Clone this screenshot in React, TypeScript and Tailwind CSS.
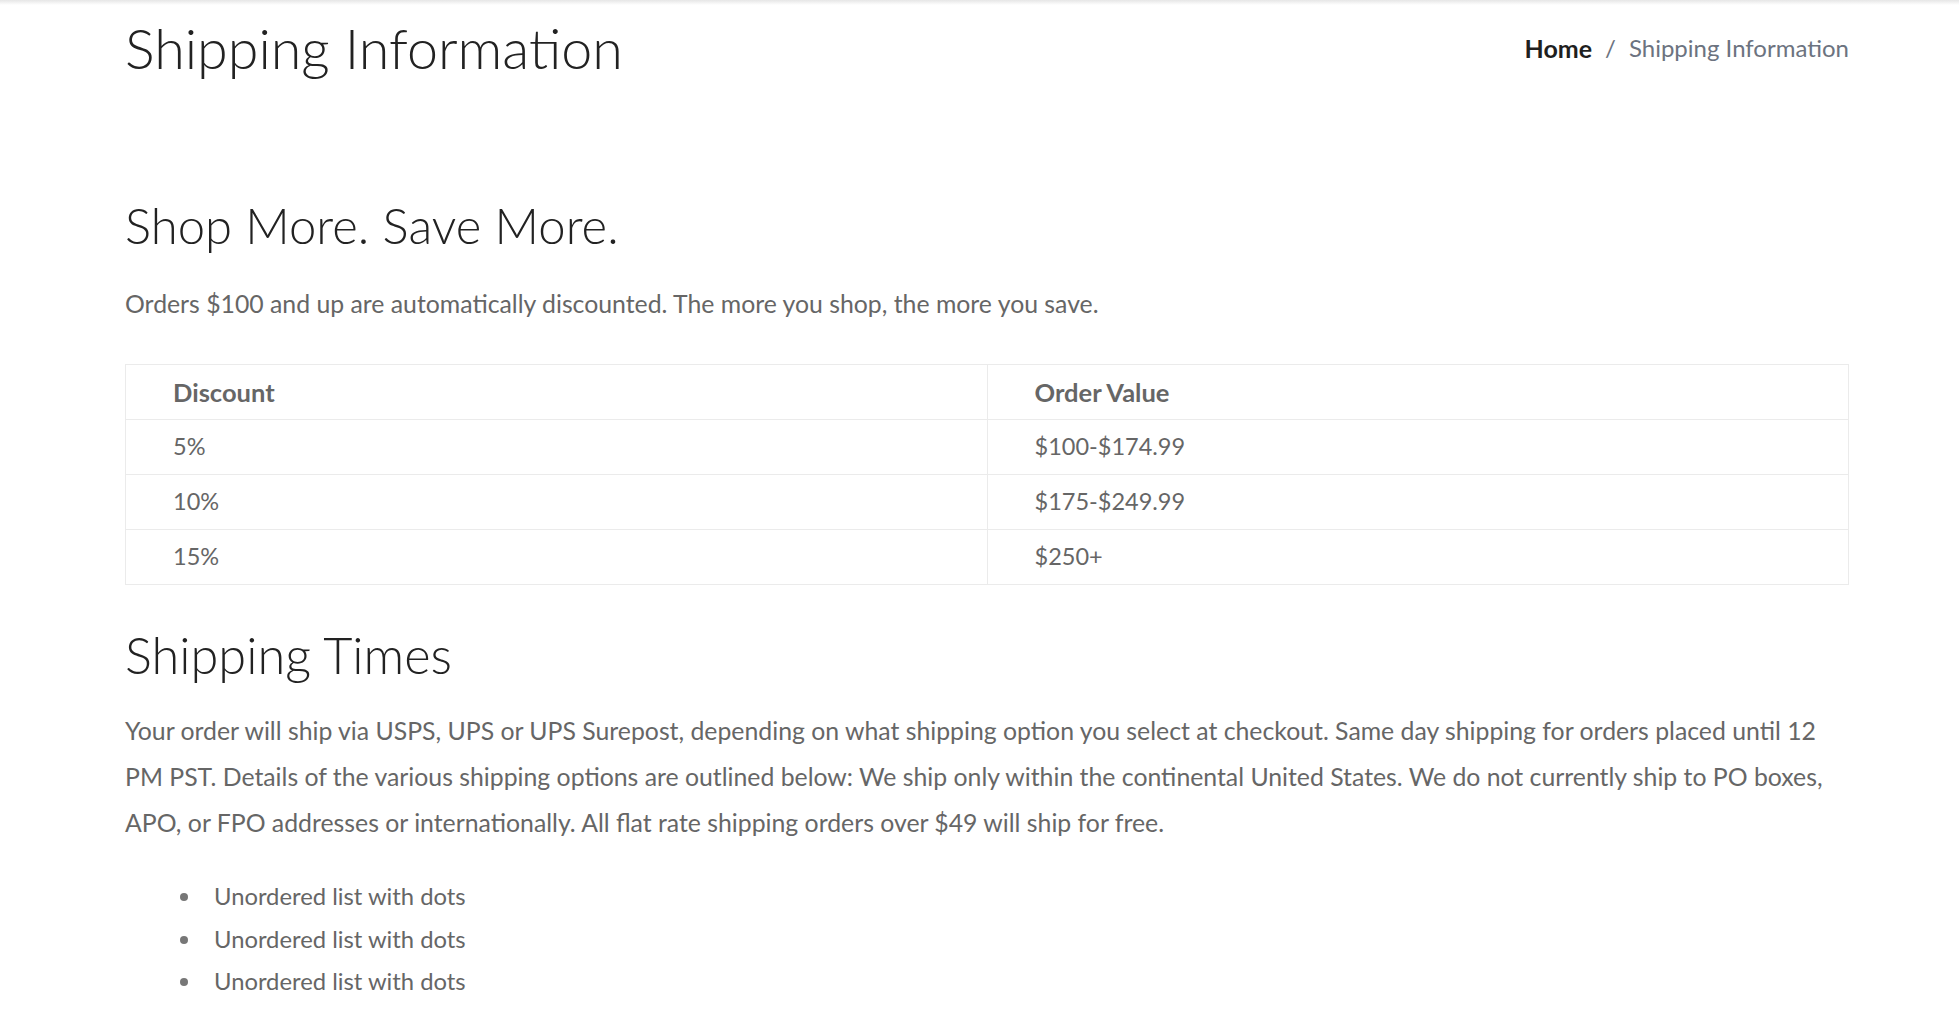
import React from "react";

const rows = [
  ["5%", "$100-$174.99"],
  ["10%", "$175-$249.99"],
  ["15%", "$250+"],
];

export default function App() {
  return (
    <div className="relative min-h-[1034px] bg-white font-['Lato',sans-serif]">
      <div className="absolute left-0 right-0 top-0 h-[5px] bg-gradient-to-b from-[#e6e6e6] to-white" />
      <div className="ml-[125px] w-[1724px]">
        <div className="flex items-center justify-between pt-[18px]">
          <h1 className="text-[55.6px] leading-[60px] font-light text-[#222]">Shipping Information</h1>
          <nav className="flex items-center text-[24px] leading-[30px]">
            <span className="text-[25px] font-bold text-[#1f1f1f]">Home</span>
            <span className="mx-[13px] text-[#6c7380]">/</span>
            <span className="text-[#6c7380]">Shipping Information</span>
          </nav>
        </div>

        <h2 className="mt-[121px] text-[49px] leading-[52px] font-light text-[#222]">Shop More. Save More.</h2>
        <p className="mt-[37px] text-[24.8px] leading-[32px] text-[#666]">
          Orders $100 and up are automatically discounted. The more you shop, the more you save.
        </p>

        <table className="mt-[44px] w-full table-fixed border-collapse text-[23.5px] text-[#666]">
          <thead>
            <tr className="h-[55px]">
              <th className="border border-[#ebebeb] pl-[47px] text-left text-[25.5px] font-bold">Discount</th>
              <th className="border border-[#ebebeb] pl-[47px] text-left text-[25.5px] font-bold">Order Value</th>
            </tr>
          </thead>
          <tbody>
            {rows.map((r) => (
              <tr key={r[0]} className="h-[55px]">
                <td className="border border-[#ebebeb] pl-[47px]">{r[0]}</td>
                <td className="border border-[#ebebeb] pl-[47px]">{r[1]}</td>
              </tr>
            ))}
          </tbody>
        </table>

        <h2 className="mt-[44px] text-[50.5px] leading-[52px] font-light text-[#222]">Shipping Times</h2>
        <p className="mt-[27px] text-[24.8px] leading-[46px] text-[#666]">
          Your order will ship via USPS, UPS or UPS Surepost, depending on what shipping option you select at checkout. Same day shipping for orders placed until 12 PM PST. Details of the various shipping options are outlined below: We ship only within the continental United States. We do not currently ship to PO boxes, APO, or FPO addresses or internationally. All flat rate shipping orders over $49 will ship for free.
        </p>

        <ul className="mt-[29px] pl-[89px] text-[23.8px] leading-[42.5px] text-[#666]">
          {[0, 1, 2].map((i) => (
            <li key={i} className="relative">
              <span className="absolute left-[-34px] top-[18px] h-[8px] w-[8px] rounded-full bg-[#777]" />
              Unordered list with dots
            </li>
          ))}
        </ul>
      </div>
    </div>
  );
}
